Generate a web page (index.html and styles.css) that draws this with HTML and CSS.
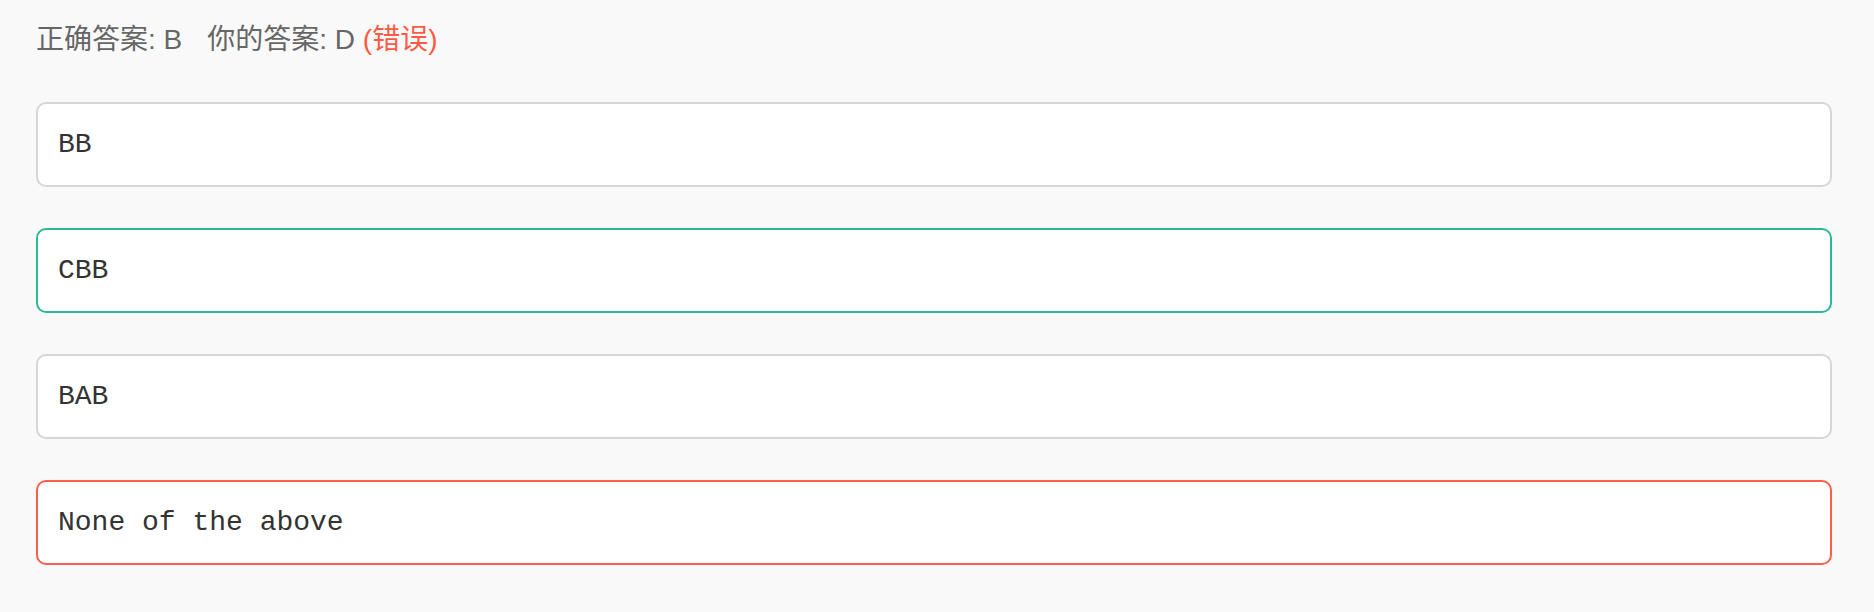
FILE: index.html
```html
<!DOCTYPE html>
<html lang="zh">
<head>
<meta charset="utf-8">
<title>答案</title>
<link rel="stylesheet" href="styles.css">
</head>
<body>
<div class="page">
  <div class="result"><span class="correct">正确答案: B</span><span class="mine">你的答案: D <span class="wrong">(错误)</span></span></div>
  <ul class="options">
    <li class="option">BB</li>
    <li class="option option-correct">CBB</li>
    <li class="option">BAB</li>
    <li class="option option-wrong">None of the above</li>
  </ul>
</div>
</body>
</html>
```
FILE: styles.css
```css
html, body {
  margin: 0;
  padding: 0;
  background: #f9f9f9;
}
.page {
  padding: 20px 42px 0 36px;
}
.result {
  font-family: "Liberation Sans", "Noto Sans CJK SC", sans-serif;
  font-size: 28px;
  line-height: 40px;
  height: 40px;
  color: #666666;
  white-space: nowrap;
}
.correct {
  margin-right: 25px;
}
.wrong {
  color: #fd5a45;
}
.options {
  list-style: none;
  margin: 42px 0 0 0;
  padding: 0;
  display: flex;
  flex-direction: column;
  gap: 41px;
}
.option {
  background: #ffffff;
  border: 2px solid #d6d6d6;
  border-radius: 10px;
  padding: 23px 19px 22px 20px;
  font-family: "Liberation Mono", "Courier New", monospace;
  font-size: 28px;
  line-height: 36px;
  color: #333333;
}
.option-correct {
  border-color: #2bb996;
}
.option-wrong {
  border-color: #fd5f4b;
}
```
